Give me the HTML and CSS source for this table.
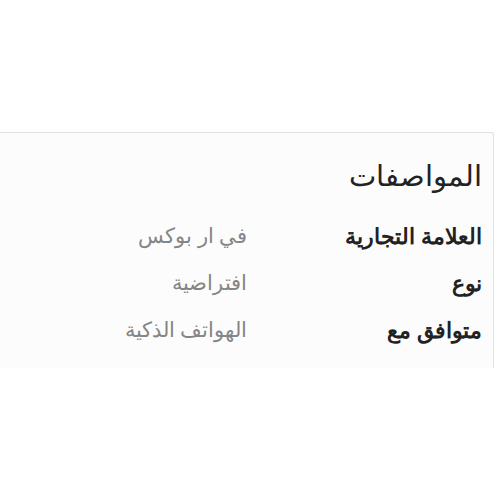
FILE: index.html
```html
<!DOCTYPE html>
<html lang="ar" dir="rtl">
<head><meta charset="utf-8"><link rel="stylesheet" href="styles.css"></head>
<body>
<section class="card">
  <h2 class="title">المواصفات</h2>
  <dl class="specs">
    <dt class="label">العلامة التجارية</dt>
    <dd class="value">في ار بوكس</dd>
    <dt class="label">نوع</dt>
    <dd class="value">افتراضية</dd>
    <dt class="label">متوافق مع</dt>
    <dd class="value">الهواتف الذكية</dd>
  </dl>
</section>
</body>
</html>
```
FILE: styles.css
```css
html,body{background:#fff}
body{margin:0;padding-top:132px;font-family:"Noto Sans",sans-serif;color:#222}
.card{
  width:504px;
  height:236px;
  margin-right:6px;
  margin-left:-10px;
  box-sizing:border-box;
  border:1px solid #e2e2e2;
  border-bottom:none;
  border-radius:3px 3px 0 0;
  background:#fcfcfc;
  padding:20px 11px 0 0;
}
.title{margin:0 0 15px;font-size:29px;font-weight:400;line-height:44px;color:#222}
.specs{margin:0;display:grid;grid-template-columns:235px 1fr}
.label{margin:0;font-size:22px;font-weight:700;line-height:47px;color:#222}
.value{margin:0;font-size:21px;line-height:47px;color:#858585}
```
